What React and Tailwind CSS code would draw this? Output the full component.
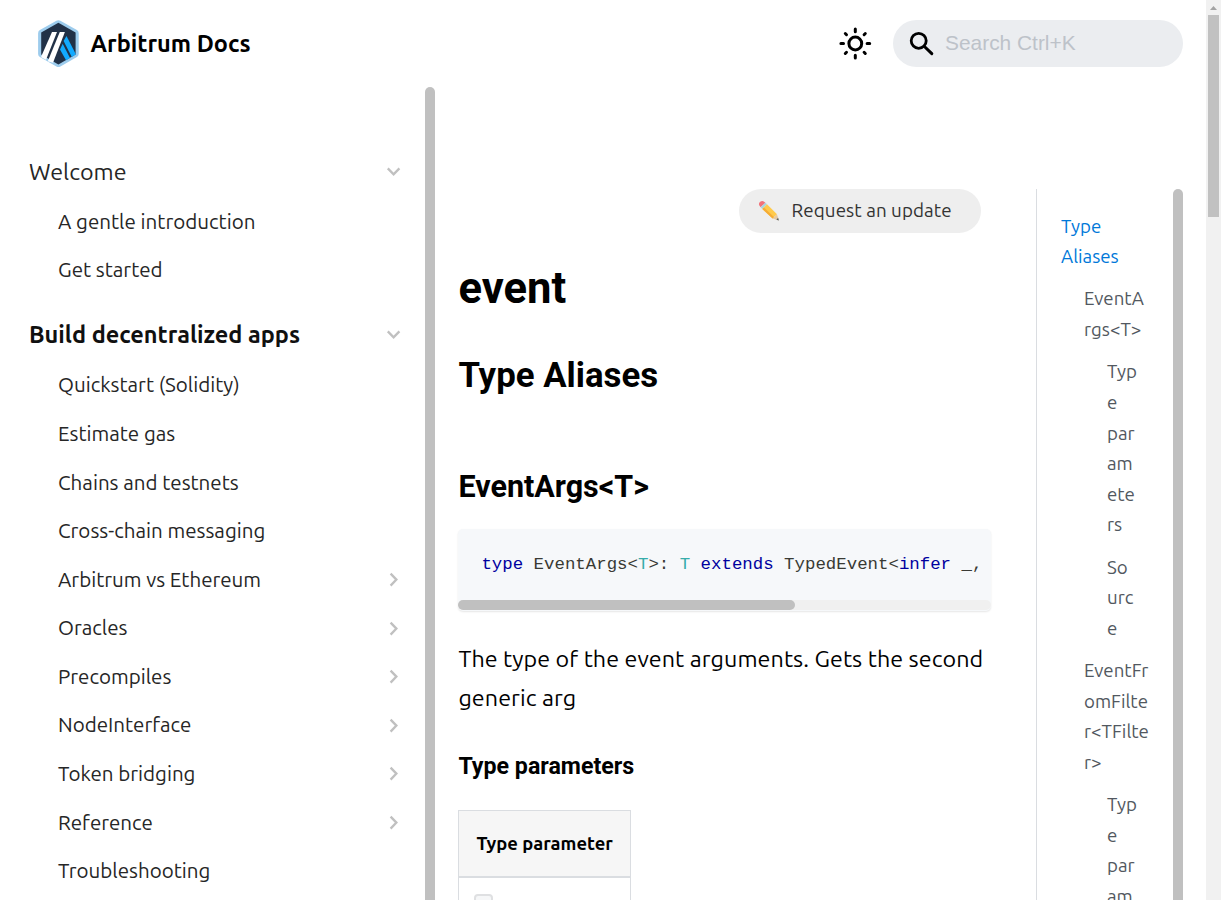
import React from 'react';

const NAV = [
  { label: 'Quickstart (Solidity)' },
  { label: 'Estimate gas' },
  { label: 'Chains and testnets' },
  { label: 'Cross-chain messaging' },
  { label: 'Arbitrum vs Ethereum', more: true },
  { label: 'Oracles', more: true },
  { label: 'Precompiles', more: true },
  { label: 'NodeInterface', more: true },
  { label: 'Token bridging', more: true },
  { label: 'Reference', more: true },
  { label: 'Troubleshooting' },
];

const TOC = [
  { cls: 'text-[#0078d9]', lines: ['Type', 'Aliases'] },
  { cls: 'pl-[23px]', lines: ['EventA', 'rgs<T>'] },
  { cls: 'pl-[46px]', lines: ['Typ', 'e', 'par', 'am', 'ete', 'rs'] },
  { cls: 'pl-[46px]', lines: ['So', 'urc', 'e'] },
  { cls: 'pl-[23px]', lines: ['EventFr', 'omFilte', 'r<TFilte', 'r>'] },
  { cls: 'pl-[46px]', lines: ['Typ', 'e', 'par', 'am'] },
];

function Chevron({ down }) {
  return (
    <svg className="shrink-0" width="18" height="18" viewBox="0 0 18 18" fill="none" stroke="#c0c0c0" strokeWidth="2.3">
      {down ? <path d="M2.8 5.4 L8.6 11.4 L14.4 5.4" /> : <path d="M5.6 2.6 L11.4 8.6 L5.6 14.6" />}
    </svg>
  );
}

function Logo() {
  return (
    <svg width="42" height="48" viewBox="-.4 .4 42 48">
      <path d="M19 1.2 Q21 0 23 1.2 L39.5 10.5 Q41.3 11.6 41.3 13.6 V34.4 Q41.3 36.4 39.5 37.5 L23 46.8 Q21 48 19 46.8 L2.5 37.5 Q.7 36.4 .7 34.4 V13.6 Q.7 11.6 2.5 10.5 Z" fill="#9dcced" />
      <path d="M21 3.2 L38.2 13 V35 L21 44.8 L3.8 35 V13 Z" fill="#213147" />
      <path d="M26.2 21.5 L29.1 16.5 L38.2 34.2 V35 L34.4 37.3 Z" fill="#12aaff" />
      <path d="M22.6 30 L25.3 24.2 L32.6 38.3 L28.6 40.6 Z" fill="#12aaff" />
      <path d="M14.6 12.5 H19.6 L8.6 40.2 L3.8 37.6 V37 Z" fill="#fff" />
      <path d="M22.4 12.5 H27.5 L15.6 43.2 L10.4 41.6 Z" fill="#fff" />
    </svg>
  );
}

function Header() {
  return (
    <header className="flex h-[87px] shrink-0 items-center pl-[37px] pr-[23px]">
      <Logo />
      <span className="ml-[11.5px] whitespace-nowrap text-[23.5px] font-bold text-black">Arbitrum Docs</span>
      <svg className="ml-auto" width="34" height="34" viewBox="0 0 34 34" fill="none" stroke="#000" strokeWidth="3" strokeLinecap="round">
        <circle cx="17.3" cy="16.5" r="6.4" />
        <path d="M17.3 2.1v2.6M17.3 28.3v2.6M2.9 16.5h2.6M29.1 16.5h2.6M7.3 6.5l1.2 1.2M26.1 25.3l1.2 1.2M7.3 26.5l1.2-1.2M26.1 7.7l1.2-1.2" />
      </svg>
      <div className="ml-[21px] flex h-[47px] w-[290px] items-center rounded-full bg-[#ebedf0] pl-[16px]">
        <svg width="26" height="26" viewBox="0 0 26 26" fill="none" stroke="#000" strokeLinecap="round">
          <circle cx="9.7" cy="9.8" r="7.5" strokeWidth="2.8" />
          <path d="M15.4 15.5 L22.8 22.7" strokeWidth="3" />
        </svg>
        <span className="-mt-[2px] ml-[10px] whitespace-nowrap font-['Liberation_Sans',sans-serif] text-[20.9px] text-[#bdc2c9]">Search Ctrl+K</span>
      </div>
    </header>
  );
}

function Sidebar() {
  return (
    <aside className="flex w-[435px] shrink-0 overflow-hidden text-[#262626]">
      <nav className="flex-1 whitespace-nowrap pl-[29px] pt-[60px] pr-[22px]">
        <div className="flex h-[50px] items-center justify-between text-[23.3px]">
          <span className="-mt-[2px]">Welcome</span> <Chevron down />
        </div>
        <div className="flex h-[48.6px] items-center pl-[29px] pt-[2px] text-[20.58px]">A gentle introduction</div>
        <div className="flex h-[48.6px] items-center pl-[29px] pt-px text-[20.58px]">Get started</div>
        <div className="mt-[16px] flex h-[50px] items-center justify-between text-[23.5px] font-bold text-[#101010]">
          <span className="-mt-[2px]">Build decentralized apps</span> <Chevron down />
        </div>
        <div className="pt-[1.4px]">
          {NAV.map((item) => (
            <div key={item.label} className="flex h-[48.57px] items-center justify-between pl-[29px] text-[20.56px]">
              <span>{item.label}</span>
              {item.more && <Chevron />}
            </div>
          ))}
        </div>
      </nav>
      <div className="w-[10px] shrink-0 rounded-t-full bg-[#c0c0c0]" />
    </aside>
  );
}

function Pencil() {
  return (
    <svg width="22" height="22" viewBox="0 0 22 22">
      <path d="M1.2 5.2 Q.4 3 2.2 1.8 Q4 .4 5.8 1.4 L7.4 2.8 L2.6 7.2 Z" fill="#f27279" />
      <path d="M2.6 7.2 L7.4 2.8 L9 4.3 L4.3 9 Z" fill="#a9d5df" />
      <path d="M4.3 9 L9 4.3 L19 14.2 L14.6 18.4 Z" fill="#ffca4b" />
      <path d="M4.3 9 L6 7.4 L16.2 17.2 L14.6 18.4 Z" fill="#f5ac36" />
      <path d="M14.6 18.4 L19 14.2 L20.8 20.4 Z" fill="#e6c9a2" />
      <path d="M18.4 19.7 L20.1 17.8 L20.9 20.6 Z" fill="#555f65" />
    </svg>
  );
}

function Article() {
  return (
    <article className="flex w-[533px] shrink-0 flex-col text-black">
      <div className="mr-[10px] mt-[102px] flex h-[44px] w-[242px] shrink-0 items-center self-end rounded-full bg-[#eeeeee] pb-px pl-[19px] text-[#333]">
        <Pencil />
        <span className="ml-[11.6px] whitespace-nowrap text-[18.8px] tracking-[0.08px]">Request an update</span>
      </div>
      <h1 className="mt-[27px] h-[58px] pl-[0.5px] font-['Roboto',sans-serif] text-[43.6px] font-bold leading-[58px]">event</h1>
      <h2 className="mt-[34px] h-[46px] pl-[0.4px] font-['Roboto',sans-serif] text-[34.8px] font-bold leading-[46px]">Type Aliases</h2>
      <h3 className="mt-[70px] h-[38px] pl-[0.4px] font-['Roboto',sans-serif] text-[30.5px] font-bold leading-[38px]">EventArgs&lt;T&gt;</h3>
      <div className="mt-[23px] flex h-[82px] shrink-0 flex-col overflow-hidden rounded-[5px] bg-[#f6f8fa] shadow-[0_1px_2px_rgba(0,0,0,0.1)]">
        <pre className="h-[71px] overflow-hidden pl-[23.4px] font-['Liberation_Mono',monospace] text-[17.4px] leading-[71px] text-[#393a34]">
          <span className="text-[#00009f]">type</span>{' EventArgs<'}<span className="text-[#36acaa]">T</span>{'>: '}<span className="text-[#36acaa]">T</span>{' '}<span className="text-[#00009f]">extends</span>{' TypedEvent<'}<span className="text-[#00009f]">infer</span>{' _,'}
        </pre>
        <div className="h-[10px] rounded-full bg-[#f0f0f0]">
          <div className="h-[10px] w-[337px] rounded-full bg-[#c0c0c0]" />
        </div>
      </div>
      <p className="mt-[28px] whitespace-nowrap pl-[0.4px] text-[23.3px] leading-[39px] tracking-[0.06px]">
        The type of the event arguments. Gets the second<br />generic arg
      </p>
      <h4 className="mt-[34px] h-[30px] pl-[0.4px] font-['Roboto',sans-serif] text-[23.2px] font-bold leading-[30px]">Type parameters</h4>
      <div className="mt-[29px] w-[173px] border border-[#dadde1]">
        <div className="flex h-[67px] items-center border-b-2 border-[#dadde1] bg-[#f6f6f6] pl-[17.5px] text-[18.4px] font-bold">
          <span className="whitespace-nowrap">Type parameter</span>
        </div>
        <div className="h-[60px] pl-[15px] pt-[16px]">
          <div className="h-[24px] w-[19px] rounded-[4px] border-2 border-[#dfe0e2] bg-[#f6f7f8]" />
        </div>
      </div>
    </article>
  );
}

function Toc() {
  return (
    <aside className="ml-[45px] mt-[102px] flex w-[147px] shrink-0 overflow-hidden border-l border-[#dadde1] text-[#525860]">
      <div className="w-[136px] shrink-0 pl-[24px] pt-[22.7px] text-[18.7px] leading-[30.64px]">
        {TOC.map((entry, i) => (
          <div key={i} className={'mb-[11.5px] whitespace-nowrap ' + entry.cls}>
            {entry.lines.map((line, j) => <div key={j}>{line}</div>)}
          </div>
        ))}
      </div>
      <div className="w-[10px] shrink-0 rounded-t-full bg-[#c0c0c0]" />
    </aside>
  );
}

export default function App() {
  return (
    <div className="flex h-[900px] w-[1221px] overflow-hidden bg-white font-['Ubuntu','Noto_Sans',sans-serif]">
      <div className="flex w-[1206px] shrink-0 flex-col">
        <Header />
        <div className="flex h-[813px] overflow-hidden">
          <Sidebar />
          <main className="flex flex-1 pl-[23px]">
            <Article />
            <Toc />
          </main>
        </div>
      </div>
      <div className="flex w-[15px] shrink-0 flex-col items-center bg-[#f1f1f1]">
        <svg width="15" height="15" viewBox="0 0 15 15"><path d="M4 10 L7.5 6 L11 10 Z" fill="#a3a3a3" /></svg>
        <div className="h-[202px] w-[11px] bg-[#c1c1c1]" />
      </div>
    </div>
  );
}
